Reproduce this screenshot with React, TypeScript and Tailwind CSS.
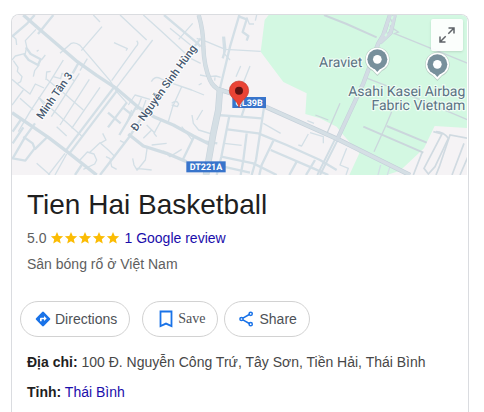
import type { ReactNode } from "react";

const minorRoads = [
  // north west blocks
  "M36 76 L48 88 L50 105",
  "M36 150 L46 138 L76 130 L80 110 L76 92 L108 58",
  "M40 152 L54 172 L52 184 L66 200 L62 215 L50 222",
  "M136 135 L124 150 M100 200 L104 182 L118 164 M110 124 L116 120",
  "M36 208 L62 230 L90 252 L106 222 L132 234",
  "M180 130 L214 100 Q226 96 240 106 L330 212 L350 245 L382 280",
  "M244 122 L306 50 M280 15 L300 36",
  "M262 146 L240 182",
  "M360 15 L440 90 M410 92 Q418 100 408 110 L335 212",
  "M458 90 L350 232",
  "M342 98 L382 116 L378 122",
  "M190 150 L150 215 L90 305 L55 365",
  "M138 210 L140 186 L152 184 M160 200 L182 206 L186 190 L208 200 L222 212",
  "M268 208 L180 345 M300 232 L215 355 M238 190 L154 320",
  "M116 262 L245 378 M60 265 L100 300",
  "M70 240 L36 285",
  "M140 208 L192 250 L250 300 M136 290 L116 262",
  "M200 378 L170 350",
  "M110 460 L150 495 M195 430 L145 495 M200 432 L165 495",
  "M240 450 L262 426 L282 432 L290 450 L284 462 L250 478",
  "M268 428 L300 398 L325 420 L345 440 M308 370 L318 390 L300 400",
  "M318 440 L330 446 L335 470 L350 478 M360 392 L372 398",
  "M398 445 L402 465 L412 482 M442 410 L436 450 L412 480 M410 475 L455 480",
  "M385 285 L405 255 L450 268 M410 300 L424 264",
  "M380 340 L395 300 M420 318 L438 270",
  "M454 215 Q464 196 482 206 L500 214 L575 240 L612 255",
  "M545 230 L518 290 L505 335",
  "M515 280 Q530 268 536 282 L532 290 L515 285",
  "M430 15 L480 60 L572 145 L602 160",
  "M536 88 L578 40 M510 55 L578 110",
  "M590 85 L620 95 L676 118 L782 124",
  "M600 195 L625 200 L648 198 L662 202 M645 202 L644 212 M596 225 L605 220",
  "M740 22 L748 42 L762 42 M770 15 L766 32",
  "M668 80 L672 130 L690 150",
  "M722 168 L708 200 M750 168 L726 228",
  "M576 315 L580 340 L596 360 L635 372 M590 330 L608 300",
  "M484 330 L462 370 L470 380 M455 405 L500 400",
  "M430 385 L455 360 M465 370 L440 345",
  "M490 422 L510 440 L545 418 M545 350 L578 392",
  "M790 340 L842 370 M922 332 L942 340",
  "M895 405 L905 408 L925 372 M930 368 L970 380 L970 400",
  "M672 400 L725 406",
  "M1040 415 L1020 465 L1045 475 L1038 495",
  "M1142 465 L1134 495 M1170 470 L1162 495",
];

const parkRoads = [
  "M1182 70 L1212 82 L1404 160",
  "M1180 72 L1195 66 L1180 56",
  "M1102 205 L1180 235 L1404 330",
  "M1175 305 L1156 350 L1122 425",
  "M946 315 L985 330 M1020 280 L980 372",
];

const sideRoads = [
  "M36 80 L82 40 L104 15 M114 72 L160 15",
  "M78 112 L92 132 L122 148 L114 165 L86 150 L72 132",
  "M236 158 L218 190",
  "M70 352 L38 400 M38 365 L62 330",
  "M105 340 L76 380 L38 445 L76 452 L104 415 L98 400 L70 380",
  "M104 418 L145 378",
  "M345 228 L195 425",
  "M354 238 L210 428",
  "M380 278 L324 352 M412 285 L358 375",
  "M368 292 L398 316 M324 308 L362 340",
  "M430 315 L390 378 L300 495",
  "M245 465 L225 495",
  "M492 15 L590 98 M602 85 L560 140",
  "M590 98 L602 110",
  "M718 15 L690 110 L660 235",
  "M718 20 L740 28 L728 66 L745 78 L740 92",
  "M672 80 L676 118 L668 145",
  "M650 315 L720 320 L785 325",
  "M736 285 L725 318 M792 292 L768 450 L755 495",
  "M688 318 L664 440 L650 495",
  "M682 358 L775 370 L860 405 L960 450 L1010 480",
  "M740 370 L730 450 L722 495",
  "M664 440 L760 460 L830 495",
  "M670 470 L750 488",
  "M820 392 L785 465 L778 495",
  "M812 420 L940 475 L985 495",
  "M890 455 L868 495 M945 450 L918 495",
  "M548 450 L582 380",
  "M652 400 L618 395",
];

const lots = [
  "M1300 365 L1326 372 L1272 475 L1285 492 L1305 470 L1345 385 Q1330 365 1308 365",
  "M1240 495 L1266 428 M1404 385 L1350 375 L1318 470 L1308 495",
  "M1392 400 L1356 495 M1404 440 L1380 495",
];

const mainRoads = [
  "M70 15 L115 55 L232 155 L290 196 L350 236 L385 266 L415 292 L465 322 L520 345 L580 378 L640 408",
  "M385 372 L430 408 L500 430 L560 455",
  "M36 308 L145 382 L205 428 L290 495",
];

const labelFont = "Roboto, 'Noto Sans', sans-serif";

const PlaceMarker = ({ x, y }: { x: number; y: number }) => (
  <g transform={`translate(${x} ${y})`}>
    <path d="M0 50 L-14 35 A37 37 0 1 1 14 35 Z" fill="#b9cfc6" />
    <path d="M0 46 L-14 32 A35 35 0 1 1 14 32 Z" fill="#fff" />
    <circle r="30" fill="#78909c" />
    <path d="M-10 27 L0 38 L10 27 Z" fill="#78909c" />
    <circle r="13" fill="#fff" />
  </g>
);

const RoadBadge = ({ x, y, width, label }: { x: number; y: number; width: number; label: string }) => (
  <g>
    <rect x={x} y={y} width={width} height="33" fill="#3874cb" />
    <text x={x + width / 2} y={y + 26} fill="#fff" fontSize="27" fontWeight="700" textAnchor="middle">
      {label}
    </text>
  </g>
);

const Map = () => (
  <svg
    viewBox="36 15 1365 480"
    preserveAspectRatio="xMidYMid slice"
    className="block h-40 w-full"
    fontFamily={labelFont}
    textRendering="geometricPrecision"
    role="img"
    aria-label="Tien Hai Basketball"
  >
    <rect x="36" y="15" width="1368" height="480" fill="#f5f3f5" />
    <path
      d="M806 15 L794 30 L782 125 L850 216 L920 250 L916 312 L960 325 L1010 350 L1030 375 L1078 430 L1048 495 L1160 495 L1200 482 L1272 415 L1304 348 L1404 354 L1404 15 Z"
      fill="#d3f8e2"
    />
    <g fill="none" stroke="#d3dfe6" strokeWidth="4" strokeLinejoin="round">
      {minorRoads.map((d) => <path key={d} d={d} />)}
    </g>
    <g fill="none" stroke="#cbd6dc" strokeWidth="4">
      {parkRoads.map((d) => <path key={d} d={d} />)}
      <path d="M972 15 L1040 42 L1130 82" strokeWidth="6" />
      <path d="M1090 350 L1270 428 M1160 348 L1280 398" strokeWidth="6" />
    </g>
    <g fill="none" stroke="#d3dfe6" strokeWidth="7" strokeLinejoin="round">
      {sideRoads.map((d) => <path key={d} d={d} />)}
    </g>
    <g fill="none" stroke="#d0dae1" strokeWidth="5">
      {lots.map((d) => <path key={d} d={d} />)}
    </g>
    <g fill="none" stroke="#d1dde4" strokeWidth="10" strokeLinejoin="round">
      {mainRoads.map((d) => <path key={d} d={d} />)}
      <path d="M1012 392 L960 495 M1005 388 L952 495" strokeWidth="6" />
    </g>
    <g fill="none" strokeLinejoin="round">
      <path d="M596 15 Q610 60 610 110 Q612 170 630 210 Q640 232 660 240" stroke="#c9d4dc" strokeWidth="13" />
      <path d="M660 235 L655 300 L640 370 L618 495" stroke="#c9d4dc" strokeWidth="20" />
      <path d="M655 238 L710 255 L800 292 L1010 386 L1230 495" stroke="#c4cfd9" strokeWidth="14" />
      <path d="M1170 15 L1150 75 L1135 100 L1090 220 L1010 392" stroke="#c4cfd9" strokeWidth="13" />
      <path d="M1184 15 L1172 68 L1140 98" stroke="#c5cfda" strokeWidth="13" />
      <path d="M596 15 Q610 60 610 110 Q612 170 630 210 Q640 232 660 240" stroke="#d5dfe5" strokeWidth="10" />
      <path d="M660 235 L655 300 L640 370 L618 495" stroke="#d5dfe5" strokeWidth="16" />
      <path d="M655 238 L710 255 L800 292 L1010 386 L1230 495" stroke="#d5dfe5" strokeWidth="10" />
      <path d="M1170 15 L1150 75 L1135 100 L1090 220 L1010 392" stroke="#d3dce4" strokeWidth="10" />
      <path d="M1184 15 L1172 68 L1140 98" stroke="#d3dce4" strokeWidth="10" />
      <path d="M1178 18 L1166 56 M1160 70 L1154 82" stroke="#d3f8e2" strokeWidth="6" strokeDasharray="10 8" />
    </g>
    <g fill="#475970" stroke="#fff" strokeWidth="6" strokeLinejoin="round" paintOrder="stroke" fontWeight="500" fontSize="33">
      <text transform="translate(126 330) rotate(-55)">Minh Tân 3</text>
      <text transform="translate(409 366) rotate(-54)">Đ. Nguyễn Sinh Hùng</text>
    </g>
    <PlaceMarker x={1132} y={148} />
    <PlaceMarker x={1312} y={163} />
    <g fill="#5b7283" stroke="#effdf5" strokeWidth="7" strokeLinejoin="round" paintOrder="stroke" fontWeight="400" fontSize="42" textAnchor="end">
      <text x="1087" y="170">Araviet</text>
      <text x="1396" y="257">Asahi Kasei Airbag</text>
      <text x="1396" y="299">Fabric Vietnam</text>
    </g>
    <RoadBadge x={697} y={261} width={101} label="QL39B" />
    <RoadBadge x={559} y={454} width={118} label="DT221A" />
    <path
      d="M717 292 C713 270 688 264 688 242 A29 29 0 1 1 746 242 C746 264 721 270 717 292 Z"
      fill="#ea4335"
      stroke="#c5392d"
      strokeWidth="2"
    />
    <circle cx="717" cy="242" r="12" fill="#5f1212" />
  </svg>
);

const Stars = () => (
  <span className="flex" role="img" aria-label="5.0">
    {[1, 2, 3, 4, 5].map((n) => (
      <svg key={n} viewBox="0 0 24 24" className="size-3.5" fill="#fbbc04">
        <path d="M12 17.6 18.5 21.5 16.8 14.1 22.5 9.2 15 8.5 12 1.5 9 8.5 1.5 9.2 7.2 14.1 5.5 21.5Z" />
      </svg>
    ))}
  </span>
);

const DirectionsIcon = () => (
  <svg viewBox="0 0 24 24" className="size-4" fill="#1a73e8">
    <path d="M22.400 10.700 13.300 1.600a1.800 1.800 0 0 0-2.600 0L1.600 10.700a1.800 1.800 0 0 0 0 2.600l9.100 9.100a1.800 1.800 0 0 0 2.600 0l9.100-9.100a1.800 1.800 0 0 0 0-2.600ZM13.500 15v-2.500H10v3H7.500V11.500a1.500 1.500 0 0 1 1.500-1.500h4.500V7.500l4 3.750Z" />
  </svg>
);

const SaveIcon = () => (
  <svg viewBox="0 0 14 18" className="h-[18px] w-3.5" fill="none" stroke="#1a73e8" strokeWidth="1.800">
    <path d="M1.500 1.500h11v14.600L7 13.600l-5.500 2.500Z" />
  </svg>
);

const ShareIcon = () => (
  <svg viewBox="0 0 16 16" className="size-4" fill="none" stroke="#1a73e8" strokeWidth="1.500">
    <path d="M3.900 7.200 10.300 3.500M3.900 8.800l6.400 3.700" />
    <circle cx="2.500" cy="8" r="1.600" />
    <circle cx="11.700" cy="2.800" r="1.600" />
    <circle cx="11.700" cy="13.200" r="1.600" />
  </svg>
);

type ActionProps = { icon: ReactNode; label: string; className: string };

const Action = ({ icon, label, className }: ActionProps) => (
  <button type="button" className={`flex h-9 items-center rounded-full border border-[#d2d2d2] pr-3 text-[#4d5156] ${className}`}>
    {icon}
    {label}
  </button>
);

const App = () => {
  return (
    <div className="flex h-screen flex-col overflow-hidden bg-white pt-3.5 pr-[15px] pl-[11px] font-['Liberation_Sans',Arial,sans-serif] text-sm text-[#474747]">
      <main className="flex-1 overflow-hidden rounded-t-lg border border-b-0 border-[#dadce0]">
        <div className="relative pr-px">
          <Map />
          <button
            type="button"
            aria-label="Expand map"
            className="absolute top-1 right-[5px] flex size-8 items-center justify-center rounded-xs bg-white/90 shadow-sm"
          >
            <svg viewBox="0 0 16 16" className="size-4" fill="none" stroke="#5f6368" strokeWidth="1.500">
              <path d="M9.500 1h5.500v5.500M15 1 9.300 6.700M1 9.500V15h5.500M1 15l5.700-5.700" />
            </svg>
          </button>
        </div>

        <div className="px-[15px] pt-3">
          <h1 className="text-[28px] leading-9 text-[#1f1f1f]">Tien Hai Basketball</h1>
          <div className="mt-0.5 flex items-center gap-1 leading-[26px] text-[#5e5e5e]">
            <span>5.0</span>
            <Stars />
            <a href="#reviews" className="text-[#1a0dab]">1 Google review</a>
          </div>
          <p className="leading-[26px] text-[#5e5e5e]">Sân bóng rổ ở Việt Nam</p>
        </div>

        <div className="mt-6 flex px-2">
          <Action icon={<DirectionsIcon />} label="Directions" className="gap-1 pl-3.5" />
          <Action icon={<SaveIcon />} label="Save" className="ml-3 gap-[5px] pl-4 font-['Liberation_Serif',serif]" />
          <Action icon={<ShareIcon />} label="Share" className="ml-1.5 gap-1 pl-3.5" />
        </div>

        <div className="mt-2.5 px-[15px] leading-[30px]">
          <p>
            <strong className="text-[#1f1f1f]">Địa chỉ:</strong> 100 Đ. Nguyễn Công Trứ, Tây Sơn, Tiền Hải, Thái Bình
          </p>
          <p>
            <strong className="text-[#1f1f1f]">Tỉnh:</strong>{" "}
            <a href="#thai-binh" className="text-[#1a0dab]">Thái Bình</a>
          </p>
        </div>
      </main>
    </div>
  );
};

export default App;
